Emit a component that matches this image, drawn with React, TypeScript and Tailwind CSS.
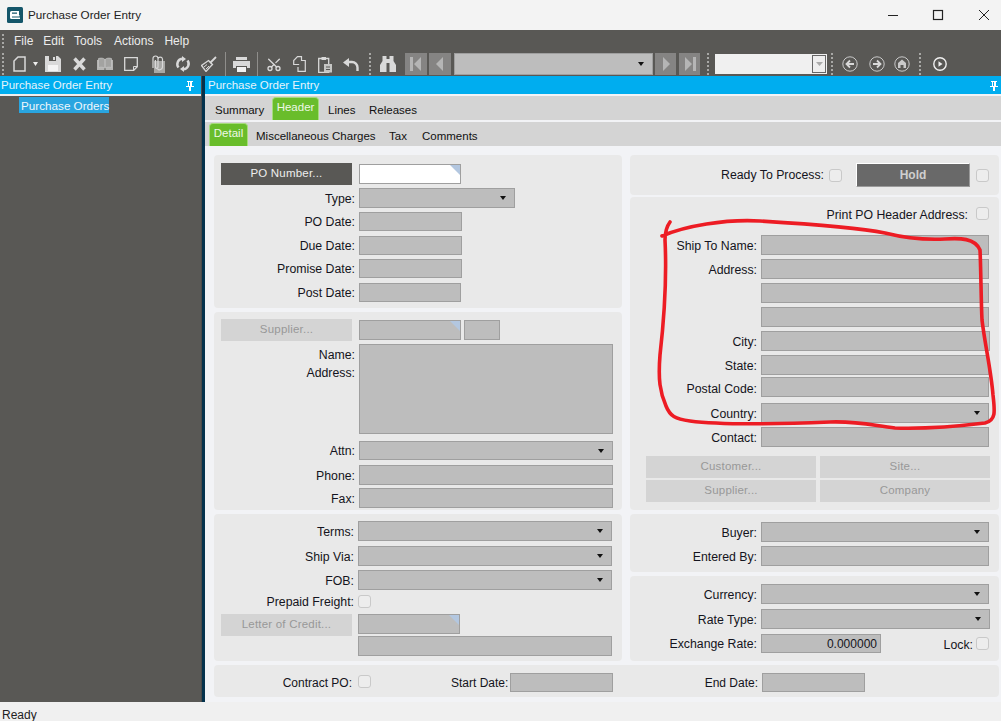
import type { ReactNode } from 'react';
import { Scissors } from 'lucide-react';

const Corner = () => (
  <svg className="absolute right-0 top-0 h-[10px] w-[10px]" viewBox="0 0 10 10">
    <path d="M0 0h10v10z" fill="#b3c7e0" />
  </svg>
);

const Caret = () => (
  <svg className="absolute right-[8px] top-1/2 h-[4px] w-[6px] -translate-y-1/2" viewBox="0 0 6 4">
    <path d="M0 0h6L3 4z" fill="#111" />
  </svg>
);

function Box({ className = '', select, corner, children }: { className?: string; select?: boolean; corner?: boolean; children?: ReactNode }) {
  return (
    <div className={`relative shrink-0 border border-[#9f9f9f] ${className.includes('bg-white') ? '' : 'bg-[#bdbdbd]'} ${className}`}>
      {children}
      {corner && <Corner />}
      {select && <Caret />}
    </div>
  );
}

const Check = ({ className = '' }: { className?: string }) => (
  <div className={`h-[13px] w-[13px] shrink-0 rounded-[3px] border border-[#c9c9c9] bg-[#ededed] ${className}`} />
);

function Btn({ children, dark, className = '' }: { children: ReactNode; dark?: boolean; className?: string }) {
  return (
    <div className={`flex h-[22px] shrink-0 items-center justify-center text-[11.5px] tracking-[0.2px] ${dark ? 'bg-[#595855] text-[#eeeeee]' : 'bg-[#d4d4d4] text-[#989898]'} ${className}`}>
      {children}
    </div>
  );
}

function Row({ label, wide, narrow, className = '', children }: { label: string; wide?: boolean; narrow?: boolean; className?: string; children: ReactNode }) {
  return (
    <div className={`flex items-center ${className}`}>
      <div className={`shrink-0 whitespace-nowrap pr-[4px] pt-[2px] text-right text-[12.3px] ${wide ? 'w-[131px]' : narrow ? 'w-[144px]' : 'w-[145px]'}`}>{label}</div>
      {children}
    </div>
  );
}

function Panel({ className = '', children }: { className?: string; children: ReactNode }) {
  return <div className={`rounded-[4px] bg-[#e9e9e9] ${className}`}>{children}</div>;
}

const Grip = ({ className = 'h-[22px]' }: { className?: string }) => (
  <div className={`w-[2px] shrink-0 border-l-2 border-dotted border-[#a8a8a6] ${className}`} />
);

const Sep = ({ className = '' }: { className?: string }) => (
  <div className={`h-[24px] w-px shrink-0 bg-[#8f8e8b] ${className}`} />
);

function NavBtn({ className = '', d }: { className?: string; d: string }) {
  return (
    <div className={`flex h-[22px] shrink-0 items-center justify-center bg-[#858483] ${className}`}>
      <svg className="h-[16px] w-[14px]" viewBox="0 0 14 16">
        <path d={d} fill="#b5b5b5" />
      </svg>
    </div>
  );
}

const Pin = () => (
  <svg className="h-[10px] w-[8px]" viewBox="0 0 8 10" fill="#fff">
    <path d="M1 0h6v1H6v4h2v1H5v4H3V6H0V5h2V1H1zM3 1v4h1V1z" fillRule="evenodd" />
  </svg>
);

const ico = '#d9d9d9';

function Toolbar() {
  return (
    <div className="flex h-[24px] items-center">
      <Grip className="ml-[2px] h-[22px]" />
      {/* new */}
      <svg className="ml-[9px] h-[16px] w-[13px] shrink-0" viewBox="0 0 13 16">
        <path d="M5 1h7v14H1V5z" fill="none" stroke={ico} strokeWidth="1.5" />
      </svg>
      <svg className="ml-[7px] h-[4px] w-[5px] shrink-0" viewBox="0 0 5 4">
        <path d="M0 0h5L2.5 4z" fill="#eee" />
      </svg>
      {/* save */}
      <svg className="ml-[7px] h-[16px] w-[16px] shrink-0" viewBox="0 0 16 16">
        <path d="M0 0h13l3 3v13H0z" fill={ico} />
        <path d="M3 9h10v6H3z" fill="#f4f4f4" />
        <path d="M4 0h7v5H4z" fill="#595855" />
        <path d="M8 1h2v3H8z" fill={ico} />
      </svg>
      {/* delete */}
      <svg className="ml-[12px] h-[14px] w-[13px] shrink-0" viewBox="0 0 13 14">
        <path d="M1.5 1.5l10 11M11.5 1.5l-10 11" stroke={ico} strokeWidth="3.4" />
      </svg>
      {/* book */}
      <svg className="ml-[11px] h-[14px] w-[16px] shrink-0" viewBox="0 0 16 14">
        <path d="M0 3l7.5-1v11L0 13zM8.5 2L16 3v10l-7.5 0z" fill="#b5b5b3" />
        <path d="M1.5 1.5C4 .8 6 1 7.5 2v9C6 10 4 10 1.5 10.500zM14.500 1.500C12 .8 10 1 8.500 2v9c1.500-1 3.500-1 6-.5z" fill="#a3a3a1" stroke="#c9c9c9" strokeWidth=".6" />
      </svg>
      {/* note */}
      <svg className="ml-[11px] h-[14px] w-[14px] shrink-0" viewBox="0 0 14 14">
        <path d="M.7.7h12.600v9l-3.600 3.600h-9z" fill="none" stroke={ico} strokeWidth="1.300" />
        <path d="M9.500 13V9.500H13" fill="none" stroke={ico} />
      </svg>
      {/* attachments */}
      <svg className="ml-[12px] h-[18px] w-[15px] shrink-0" viewBox="0 0 15 18">
        <path d="M4 6h11v12H4z" fill="#a8a8a6" />
        <path d="M3 13V3.500a2.500 2.500 0 015 0V12a1.300 1.300 0 01-2.600 0V5M8 4a2.300 2.300 0 014.500 0v8a3 3 0 01-5 2" fill="none" stroke={ico} strokeWidth="1.200" />
      </svg>
      {/* refresh */}
      <svg className="ml-[10px] h-[16px] w-[16px] shrink-0" viewBox="0 0 16 16">
        <path d="M3.500 11.500A5.500 5.500 0 017 2.700M12.500 4.500A5.500 5.500 0 019 13.300" fill="none" stroke={ico} strokeWidth="2.500" />
        <path d="M7 0l4 3-4 3zM9 16l-4-3 4-3z" fill={ico} />
      </svg>
      {/* clear */}
      <svg className="ml-[10px] h-[16px] w-[16px] shrink-0" viewBox="0 0 16 16">
        <path d="M15 1L9 7" stroke={ico} strokeWidth="1.800" />
        <path d="M7.500 4.500l4 4-2.500 2.500L5 15.500 .5 9.500z" fill="none" stroke={ico} strokeWidth="1.300" />
        <path d="M3 11l3-2.500M5 13l3-3" stroke={ico} />
      </svg>
      <Sep className="ml-[8px]" />
      {/* print */}
      <svg className="ml-[7px] h-[15px] w-[17px] shrink-0" viewBox="0 0 17 15">
        <path d="M3 0h11v3H3z" fill={ico} />
        <path d="M0 4h17v7h-3V9H3v2H0z" fill={ico} />
        <path d="M4 10h9v5H4z" fill="#f2f2f2" />
      </svg>
      <Sep className="ml-[7px]" />
      <Scissors className="ml-[8px] h-[17px] w-[16px] shrink-0 -rotate-90" color={ico} strokeWidth={2} />
      {/* copy */}
      <svg className="ml-[11px] h-[16px] w-[13px] shrink-0" viewBox="0 0 13 16">
        <path d="M4.500.7h4v7.800H.7V4.500z" fill="none" stroke={ico} strokeWidth="1.200" />
        <path d="M8 4.500h4.300v10.800H5V11" fill="#595855" stroke={ico} strokeWidth="1.200" />
      </svg>
      {/* paste */}
      <svg className="ml-[12px] h-[17px] w-[14px] shrink-0" viewBox="0 0 14 17">
        <path d="M.7 2.500h10v13.800H.7z" fill="none" stroke={ico} strokeWidth="1.300" />
        <path d="M3.500 1h4.500v3H3.500z" fill={ico} />
        <path d="M6 8h8v8.500H6z" fill="#c6c6c4" />
        <path d="M8 11h4M8 13.500h4" stroke="#595855" />
      </svg>
      {/* undo */}
      <svg className="ml-[11px] h-[13px] w-[16px] shrink-0" viewBox="0 0 16 13">
        <path d="M5 4h4a5.500 5.500 0 015.500 5.500V13" fill="none" stroke={ico} strokeWidth="2.400" />
        <path d="M6 0v9L0 4.500z" fill={ico} />
      </svg>
      <Grip className="ml-[10px] h-[22px]" />
      {/* find */}
      <svg className="ml-[9px] h-[16px] w-[16px] shrink-0" viewBox="0 0 16 16">
        <path d="M2.500 0h4v3h3V0h4v5l2.500 4v7H9.500V7h-3v9H0V9l2.500-4z" fill={ico} />
        <path d="M7 3.500h2V6H7z" fill={ico} />
      </svg>
      <NavBtn className="ml-[9px] w-[22px]" d="M1 1h3v14H1zM12 1v14L5 8z" />
      <NavBtn className="ml-[2px] w-[22px]" d="M10 1v14L3 8z" />
      <Box select className="ml-[3px] h-[22px] w-[199px]" />
      <NavBtn className="ml-[2px] w-[21px]" d="M4 1v14l7-7z" />
      <NavBtn className="ml-[3px] w-[21px]" d="M2 1v14l7-7zM10 1h3v14h-3z" />
      <Grip className="ml-[7px] h-[22px]" />
      <div className="relative ml-[6px] h-[20px] w-[112px] shrink-0 bg-[#f0f0f0]">
        <div className="absolute bottom-[1px] right-[1px] top-[1px] flex w-[14px] items-center justify-center border border-[#666] bg-[#eeeeee]">
          <svg className="h-[4px] w-[7px]" viewBox="0 0 7 4">
            <path d="M0 0h7L3.500 4z" fill="#aaa" />
          </svg>
        </div>
      </div>
      <Grip className="ml-[4px] h-[22px]" />
      <svg className="ml-[9px] h-[16px] w-[16px] shrink-0" viewBox="0 0 16 16">
        <circle cx="8" cy="8" r="7.200" fill="none" stroke="#c9c9c9" />
        <path d="M12 8H5M8 4.500L4.500 8 8 11.500" fill="none" stroke="#d9d9d9" strokeWidth="1.800" />
      </svg>
      <svg className="ml-[11px] h-[16px] w-[16px] shrink-0" viewBox="0 0 16 16">
        <circle cx="8" cy="8" r="7.200" fill="none" stroke="#c9c9c9" />
        <path d="M4 8h7M8 4.500L11.500 8 8 11.500" fill="none" stroke="#d9d9d9" strokeWidth="1.800" />
      </svg>
      <svg className="ml-[9px] h-[16px] w-[16px] shrink-0" viewBox="0 0 16 16">
        <circle cx="8" cy="8" r="7.200" fill="none" stroke="#c9c9c9" />
        <path d="M8 3.500L12 7v5H9.500V9h-3v3H4V7z" fill="#c9c9c9" />
      </svg>
      <Grip className="ml-[9px] h-[22px]" />
      <svg className="ml-[12px] h-[14px] w-[14px] shrink-0" viewBox="0 0 14 14">
        <circle cx="7" cy="7" r="6.200" fill="none" stroke="#f0f0f0" strokeWidth="1.400" />
        <path d="M5.500 4.200L9.500 7l-4 2.800z" fill="#f0f0f0" />
      </svg>
    </div>
  );
}

export default function App() {
  return (
    <div className="relative flex h-[721px] w-[1001px] flex-col overflow-hidden bg-[#f0f0f0] font-['Liberation_Sans',Arial,sans-serif] text-[12px] text-[#141420]">
      {/* title bar */}
      <div className="flex h-[30px] shrink-0 items-center bg-[#f3f3f3]">
        <svg className="ml-[7px] h-[16px] w-[16px]" viewBox="0 0 16 16">
          <rect width="16" height="16" rx="1.500" fill="#14566a" />
          <path d="M3 8V5.500A1.500 1.500 0 014.500 4H12v4zM5 6.700h5V5.500H5zM3 8h9.500v1.500H5v1h8V12H4.500A1.500 1.500 0 013 10.500z" fill="#fff" fillRule="evenodd" />
        </svg>
        <span className="ml-[5px] text-[11.7px] text-[#222]">Purchase Order Entry</span>
        <svg className="ml-auto mr-[11px] h-[12px] w-[102px]" viewBox="0 0 102 12" fill="none" stroke="#222">
          <path d="M0 6.500h10" />
          <rect x="45.500" y="1.500" width="9" height="9" strokeWidth="1.200" />
          <path d="M91 1l10 10M101 1L91 11" />
        </svg>
      </div>

      {/* menu and toolbar */}
      <div className="h-[46px] shrink-0 bg-[#595855] text-[#ececec]">
        <div className="flex h-[22px] items-center">
          <Grip className="ml-[2px] h-[14px]" />
          <span className="ml-[10px]">File</span>
          <span className="ml-[10px]">Edit</span>
          <span className="ml-[10px]">Tools</span>
          <span className="ml-[12px]">Actions</span>
          <span className="ml-[11px]">Help</span>
        </div>
        <Toolbar />
      </div>

      <div className="flex h-[626px] shrink-0">
        {/* left tree */}
        <div className="w-[201px] shrink-0 bg-[#595855]">
          <div className="flex h-[18px] items-center justify-between bg-[#00adef] pl-[1px] pr-[7px] pt-[1px] text-[11.5px] text-[#e6f4fb]">
            <span>Purchase Order Entry</span>
            <Pin />
          </div>
          <div className="h-[2px] bg-[#eeeeee]" />
          <div className="ml-[19px] mt-[1px] flex h-[16px] w-[90px] items-center whitespace-nowrap bg-[#29a5e0] pl-[2px] pt-[1px] text-[11.7px] text-[#eef7fc]">Purchase Orders</div>
        </div>
        <div className="w-[4px] shrink-0 border-l border-[#4a4a4a] bg-[#04324c]" />

        {/* right side */}
        <div className="flex min-w-0 flex-1 flex-col bg-[#f2f3f6]">
          <div className="flex h-[18px] shrink-0 items-center justify-between bg-[#00adef] pl-[3px] pr-[3px] pt-[1px] text-[11.5px] text-[#e6f4fb]">
            <span>Purchase Order Entry</span>
            <Pin />
          </div>
          <div className="mt-[2px] flex h-[24px] shrink-0 items-end whitespace-nowrap bg-[#d4d4d4] text-[11.5px] text-[#111]">
            <span className="mb-[1px] ml-[10px] w-[47px]">Summary</span>
            <span className="ml-[10px] flex h-[23px] w-[47px] items-center justify-center rounded-t-[4px] border border-b-0 border-[#a6dc7c] bg-[#69bd2b] pb-[2px] text-[#eef8e6]">Header</span>
            <span className="mb-[1px] ml-[9px] w-[27px]">Lines</span>
            <span className="mb-[1px] ml-[14px]">Releases</span>
          </div>
          <div className="mt-[2px] flex h-[24px] shrink-0 items-end whitespace-nowrap bg-[#d4d4d4] text-[11.5px] text-[#111]">
            <span className="ml-[4px] flex h-[23px] w-[39px] items-center justify-center rounded-t-[4px] border border-b-0 border-[#a6dc7c] bg-[#69bd2b] pb-[2px] text-[#eef8e6]">Detail</span>
            <span className="mb-[1px] ml-[8px] w-[121px]">Miscellaneous Charges</span>
            <span className="mb-[1px] ml-[12px] w-[19px]">Tax</span>
            <span className="mb-[1px] ml-[14px]">Comments</span>
          </div>

          <div className="ml-[9px] mr-[2px] mt-[9px] flex gap-[8px]">
            {/* left column */}
            <div className="flex w-[408px] shrink-0 flex-col gap-[4px]">
              <Panel className="h-[153px] pt-[8px]">
                <div className="flex h-[22px] items-center pl-[7px]">
                  <Btn dark className="w-[131px]">PO Number...</Btn>
                  <Box corner className="ml-[7px] h-[20px] w-[102px] bg-white" />
                </div>
                <Row label="Type:" className="mt-[3px] h-[20px]"><Box select className="h-[20px] w-[156px]" /></Row>
                <Row label="PO Date:" className="mt-[4px] h-[19px]"><Box className="h-[19px] w-[103px]" /></Row>
                <Row label="Due Date:" className="mt-[5px] h-[19px]"><Box className="h-[19px] w-[103px]" /></Row>
                <Row label="Promise Date:" className="mt-[4px] h-[19px]"><Box className="h-[19px] w-[103px]" /></Row>
                <Row label="Post Date:" className="mt-[5px] h-[19px]"><Box className="h-[19px] w-[102px]" /></Row>
              </Panel>

              <Panel className="h-[198px] pt-[7px]">
                <div className="flex h-[22px] items-center pl-[7px]">
                  <Btn className="w-[131px]">Supplier...</Btn>
                  <Box corner className="ml-[7px] h-[20px] w-[102px]" />
                  <Box className="ml-[3px] h-[20px] w-[36px]" />
                </div>
                <div className="mt-[3px] flex h-[90px]">
                  <div className="w-[145px] shrink-0 pr-[4px] pt-[2px] text-right text-[12.3px] leading-[18px]">
                    <div>Name:</div>
                    <div>Address:</div>
                  </div>
                  <Box className="h-[90px] w-[254px]" />
                </div>
                <Row label="Attn:" className="mt-[7px] h-[19px]"><Box select className="h-[19px] w-[254px]" /></Row>
                <Row label="Phone:" className="mt-[5px] h-[20px]"><Box className="h-[20px] w-[254px]" /></Row>
                <Row label="Fax:" className="mt-[3px] h-[20px]"><Box className="h-[20px] w-[254px]" /></Row>
              </Panel>

              <Panel className="h-[147px] pt-[7px]">
                <Row narrow label="Terms:" className="h-[20px]"><Box select className="h-[20px] w-[254px]" /></Row>
                <Row narrow label="Ship Via:" className="mt-[5px] h-[20px]"><Box select className="h-[20px] w-[254px]" /></Row>
                <Row narrow label="FOB:" className="mt-[4px] h-[20px]"><Box select className="h-[20px] w-[254px]" /></Row>
                <Row narrow label="Prepaid Freight:" className="mt-[5px] h-[13px]"><Check /></Row>
                <div className="mt-[6px] flex h-[22px] items-start pl-[7px]">
                  <Btn className="w-[131px]">Letter of Credit...</Btn>
                  <Box corner className="ml-[6px] h-[20px] w-[102px]" />
                </div>
                <Box className="ml-[144px] h-[20px] w-[254px]" />
              </Panel>
            </div>

            {/* right column */}
            <div className="flex w-[369px] shrink-0 flex-col">
              <Panel className="flex h-[40px] items-center justify-end pr-[10px]">
                <span className="text-[12.3px]">Ready To Process:</span>
                <Check className="ml-[5px]" />
                <div className="ml-[14px] flex h-[24px] w-[114px] items-center justify-center border border-b-[#9a9a9a] border-l-white border-r-[#9a9a9a] border-t-white bg-[#696969] font-bold text-[#cfcfcf]">Hold</div>
                <Check className="ml-[6px]" />
              </Panel>

              <Panel className="mt-[2px] h-[313px] pt-[10px]">
                <div className="flex h-[13px] items-center justify-end pr-[10px]">
                  <span className="pt-[3px] text-[12.3px]">Print PO Header Address:</span>
                  <Check className="ml-[8px]" />
                </div>
                <Row wide label="Ship To Name:" className="mt-[15px] h-[20px]"><Box className="h-[20px] w-[228px]" /></Row>
                <Row wide label="Address:" className="mt-[4px] h-[20px]"><Box className="h-[20px] w-[228px]" /></Row>
                <Row wide label="" className="mt-[4px] h-[20px]"><Box className="h-[20px] w-[228px]" /></Row>
                <Row wide label="" className="mt-[4px] h-[20px]"><Box className="h-[20px] w-[228px]" /></Row>
                <Row wide label="City:" className="mt-[4px] h-[20px]"><Box className="h-[20px] w-[229px]" /></Row>
                <Row wide label="State:" className="mt-[4px] h-[20px]"><Box className="h-[20px] w-[228px]" /></Row>
                <div className="mt-[2px] flex h-[20px] items-center">
                  <div className="w-[131px] shrink-0 pr-[4px] pt-[5px] text-right text-[12.3px]">Postal Code:</div>
                  <Box className="h-[20px] w-[228px]" />
                </div>
                <Row wide label="Country:" className="mt-[6px] h-[20px]"><Box select className="h-[20px] w-[228px]" /></Row>
                <Row wide label="Contact:" className="mt-[4px] h-[20px]"><Box className="h-[20px] w-[228px]" /></Row>
                <div className="ml-[16px] mt-[9px] grid w-[344px] grid-cols-2 gap-x-[4px] gap-y-[2px]">
                  <Btn>Customer...</Btn>
                  <Btn>Site...</Btn>
                  <Btn>Supplier...</Btn>
                  <Btn>Company</Btn>
                </div>
              </Panel>

              <Panel className="mt-[4px] h-[58px] pt-[8px]">
                <Row wide label="Buyer:" className="h-[20px]"><Box select className="h-[20px] w-[228px]" /></Row>
                <Row wide label="Entered By:" className="mt-[4px] h-[20px]"><Box className="h-[20px] w-[228px]" /></Row>
              </Panel>

              <Panel className="mt-[4px] h-[85px] pt-[8px]">
                <Row wide label="Currency:" className="h-[20px]"><Box select className="h-[20px] w-[228px]" /></Row>
                <Row wide label="Rate Type:" className="mt-[5px] h-[20px]"><Box select className="h-[20px] w-[229px]" /></Row>
                <Row wide label="Exchange Rate:" className="mt-[5px] h-[19px]">
                  <Box className="flex h-[19px] w-[120px] items-center justify-end pr-[3px]">0.000000</Box>
                  <span className="ml-auto pt-[3px] text-[12.3px]">Lock:</span>
                  <Check className="ml-[3px] mr-[10px]" />
                </Row>
              </Panel>
            </div>
          </div>

          {/* bottom strip */}
          <Panel className="ml-[9px] mr-[2px] mt-[4px] flex h-[32px] shrink-0 items-center whitespace-nowrap pt-[3px]">
            <span className="w-[138px] shrink-0 text-right">Contract PO:</span>
            <Check className="mb-[2px] ml-[6px]" />
            <span className="ml-[80px] w-[56px] shrink-0 text-right">Start Date:</span>
            <Box className="ml-[3px] h-[19px] w-[103px]" />
            <span className="ml-[91px] w-[54px] shrink-0 text-right">End Date:</span>
            <Box className="ml-[4px] h-[19px] w-[103px]" />
          </Panel>
        </div>
      </div>

      {/* status bar */}
      <div className="flex h-[19px] shrink-0 items-center pl-[2px] pt-[6px] text-[#222]">Ready</div>

      {/* red hand drawn annotation */}
      <svg className="pointer-events-none absolute left-0 top-0 h-[721px] w-[1001px]" viewBox="0 0 1001 721" fill="none" stroke="#ed1c24" strokeWidth="3.600" strokeLinecap="round" strokeLinejoin="round">
        <path d="M662 236C685 226 725 219 760 221C810 224 860 228 885 233C905 238 925 240 945 239C960 238 975 238 980 250C981 270 981 300 982 320C985 345 991 370 993 395C995 412 996 420 985 423C960 426 925 429 895 428C875 426 860 421 830 422C780 424 720 425 690 421C675 419 670 416 666 406C660 392 658 380 660 355C664 320 667 280 665 240C665 232 667 226 670 222" />
      </svg>
    </div>
  );
}
